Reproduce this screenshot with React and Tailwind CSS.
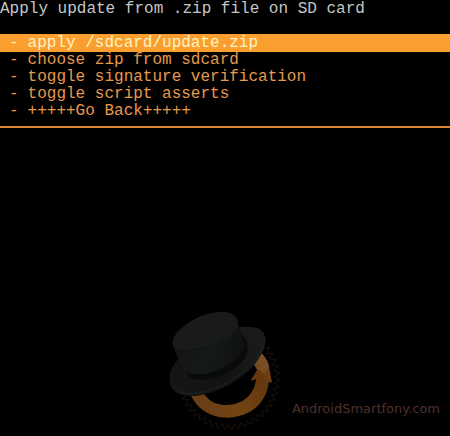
import React, { useState } from "react";

const MENU_ITEMS = [
  "apply /sdcard/update.zip",
  "choose zip from sdcard",
  "toggle signature verification",
  "toggle script asserts",
  "+++++Go Back+++++",
];

// Zigzag outline of the gear behind the hat
const gearPoints = () => {
  const points = [];
  for (let i = 0; i <= 54; i++) {
    const angle = ((-42 + i * 3.9) * Math.PI) / 180;
    const r = i % 2 ? 153 : 136;
    const x = 222 + r * Math.cos(angle);
    const y = 252 + r * Math.sin(angle);
    points.push(`${x.toFixed(1)},${y.toFixed(1)}`);
  }
  return points.join(" ");
};

const HatLogo = () => (
  <svg
    className="w-[130px] h-[131px]"
    viewBox="15 30 390 393"
    fill="none"
    aria-hidden="true"
  >
    <defs>
      <linearGradient id="arrow" x1="110" y1="340" x2="345" y2="190" gradientUnits="userSpaceOnUse">
        <stop offset="0" stopColor="#663b18" />
        <stop offset="0.4" stopColor="#744414" />
        <stop offset="0.8" stopColor="#65370c" />
        <stop offset="1" stopColor="#75491f" />
      </linearGradient>
      <linearGradient id="crown" x1="60" y1="150" x2="270" y2="200" gradientUnits="userSpaceOnUse">
        <stop offset="0" stopColor="#131514" />
        <stop offset="0.5" stopColor="#161a17" />
        <stop offset="1" stopColor="#0e100f" />
      </linearGradient>
      <linearGradient id="brim" x1="50" y1="270" x2="320" y2="120" gradientUnits="userSpaceOnUse">
        <stop offset="0" stopColor="#141615" />
        <stop offset="0.5" stopColor="#121413" />
        <stop offset="1" stopColor="#191c1a" />
      </linearGradient>
    </defs>
    <polyline points={gearPoints()} stroke="#1c1209" strokeWidth="3" />
    <path
      d="M106 298C130 350 175 369 220 368C285 366 335 325 341 262L351 262L340 205Q330 183 316 172L293 202L306 225L287 257L303 253C298 300 262 330 215 330C185 330 160 318 147 296Z"
      fill="url(#arrow)"
    />
    <path d="M316 172L293 202L306 222L330 236L342 214Q332 184 316 172Z" fill="#83592f" opacity="0.5" />
    {/* brim */}
    <path
      d="M76 189C50 208 38 240 46 268C54 297 87 307 128 302C190 293 250 258 290 218C318 188 335 153 330 125C325 98 295 92 252 96Z"
      fill="url(#brim)"
    />
    <path
      d="M46 262C56 291 88 300 130 294C190 285 246 250 286 211C314 182 330 152 330 128"
      stroke="#202321"
      strokeWidth="3"
    />
    {/* band */}
    <path
      d="M76 194L98 240C112 258 150 260 190 246C232 231 268 202 278 172L276 140L250 100Z"
      fill="#090b0a"
    />
    <path
      d="M53 147C62 171 78 213 90 227C105 242 145 241 185 227C225 213 262 183 269 151L249 87Z"
      fill="url(#crown)"
    />
    {/* crown top */}
    <path
      d="M53 145C50 125 77 95 118 73C153 55 195 46 222 53C243 59 252 75 248 91C239 117 198 136 155 149C113 161 60 168 53 145Z"
      fill="#181b19"
    />
    <path d="M54 149C66 166 113 161 155 149C198 136 239 117 248 92" stroke="#222623" strokeWidth="2" />
  </svg>
);

const App = () => {
  const [selected, setSelected] = useState(0);

  return (
    <main className="min-h-screen flex flex-col bg-black font-['Liberation_Mono',monospace] text-[16px] leading-[17px]">
      <h1 className="pt-px text-[#c6c6c6] whitespace-pre">
        Apply update from .zip file on SD card
      </h1>

      <ul className="mt-4 pb-[6px] border-b-2 border-[#d9882f]">
        {MENU_ITEMS.map((item, index) => (
          <li key={item}>
            <button
              type="button"
              onClick={() => setSelected(index)}
              className={`flex w-full gap-[9px] pl-[9px] text-left whitespace-pre ${
                index === selected
                  ? "bg-[#fa9f2f] text-[#fff3c4] leading-[18px]"
                  : "text-[#e59a4c]"
              }`}
            >
              <span>-</span>
              <span>{item}</span>
            </button>
          </li>
        ))}
      </ul>

      <div className="mt-auto grid grid-cols-[1fr_auto_1fr] items-end">
        <div />
        <HatLogo />
        <a
          href="#"
          className="justify-self-end mr-[10px] mb-[19px] font-['DejaVu_Sans',sans-serif] text-[13px] text-[#4f302c]"
        >
          AndroidSmartfony.com
        </a>
      </div>
    </main>
  );
};

export default App;
